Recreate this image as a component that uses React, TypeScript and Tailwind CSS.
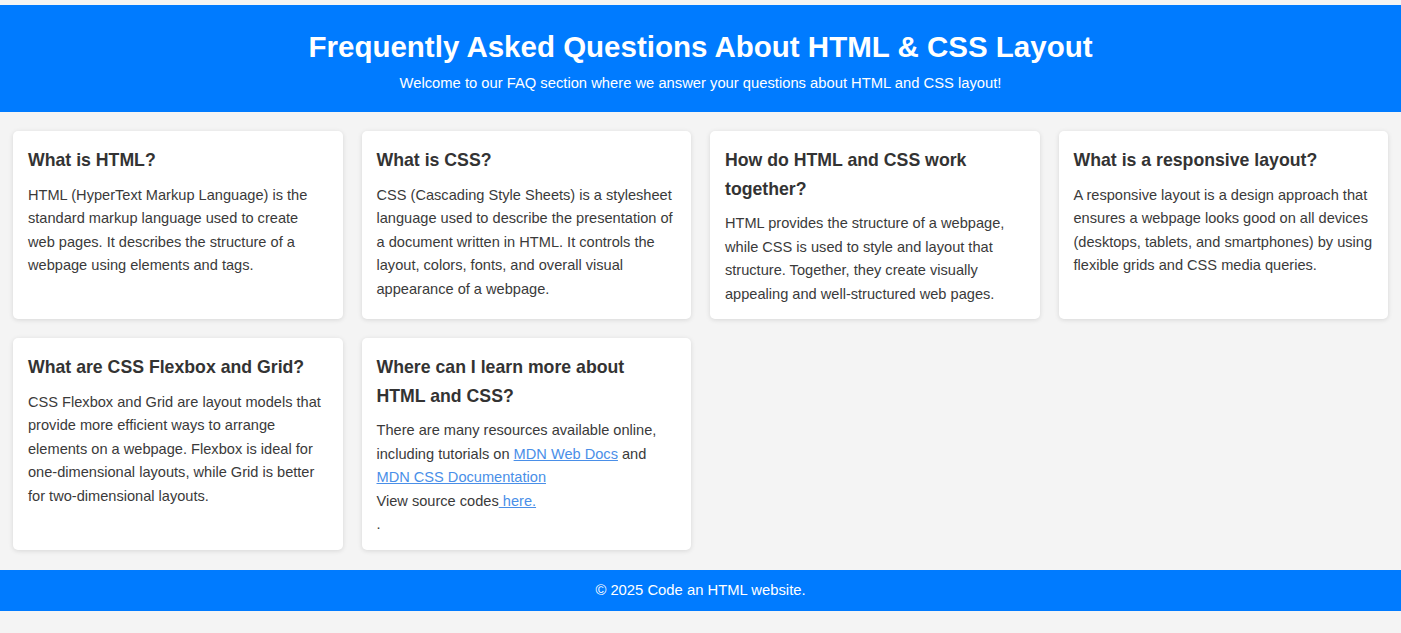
const faqs = [
  {
    q: "What is HTML?",
    a: "HTML (HyperText Markup Language) is the standard markup language used to create web pages. It describes the structure of a webpage using elements and tags.",
  },
  {
    q: "What is CSS?",
    a: "CSS (Cascading Style Sheets) is a stylesheet language used to describe the presentation of a document written in HTML. It controls the layout, colors, fonts, and overall visual appearance of a webpage.",
  },
  {
    q: "How do HTML and CSS work together?",
    a: "HTML provides the structure of a webpage, while CSS is used to style and layout that structure. Together, they create visually appealing and well-structured web pages.",
  },
  {
    q: "What is a responsive layout?",
    a: "A responsive layout is a design approach that ensures a webpage looks good on all devices (desktops, tablets, and smartphones) by using flexible grids and CSS media queries.",
  },
  {
    q: "What are CSS Flexbox and Grid?",
    a: "CSS Flexbox and Grid are layout models that provide more efficient ways to arrange elements on a webpage. Flexbox is ideal for one-dimensional layouts, while Grid is better for two-dimensional layouts.",
  },
];

function Card({ q, children }: { q: string; children: React.ReactNode }) {
  return (
    <div className="bg-white rounded-[5px] shadow-[0_1px_5px_rgba(0,0,0,0.12)] px-[15px] pt-[15px] pb-[13px]">
      <h3 className="text-[17.7px] font-bold leading-[28.5px] mb-[9px]">{q}</h3>
      <div className="text-[14.6px] leading-[23.5px] text-[#3a3a3a]">{children}</div>
    </div>
  );
}

export default function App() {
  return (
    <div className="min-h-[633px] bg-[#f4f4f4] pt-[5px] text-[#333] font-['Liberation_Sans',Arial,sans-serif]">
      <header className="bg-[#007bff] text-white text-center h-[107px] flex flex-col items-center pt-[25px]">
        <h1 className="text-[29.5px] font-bold leading-[34px]">Frequently Asked Questions About HTML &amp; CSS Layout</h1>
        <p className="text-[14.75px] leading-[20px] mt-[9px]">Welcome to our FAQ section where we answer your questions about HTML and CSS layout!</p>
      </header>

      <main className="grid grid-cols-4 gap-[19px] px-[13px] pt-[19px] pb-[20px]">
        {faqs.map((f) => (
          <Card key={f.q} q={f.q}>
            <p>{f.a}</p>
          </Card>
        ))}
        <Card q="Where can I learn more about HTML and CSS?">
          <p>
            There are many resources available online, including tutorials on{" "}
            <a href="#" className="text-[#4a8fe8] underline">MDN Web Docs</a> and{" "}
            <a href="#" className="text-[#4a8fe8] underline">MDN CSS Documentation</a>
            <br />
            View source codes<a href="#" className="text-[#4a8fe8] underline"> here.</a>
            <br />.
          </p>
        </Card>
      </main>

      <footer className="bg-[#007bff] text-white text-center text-[14.8px] h-[41px] flex items-center justify-center">
        © 2025 Code an HTML website.
      </footer>
    </div>
  );
}
